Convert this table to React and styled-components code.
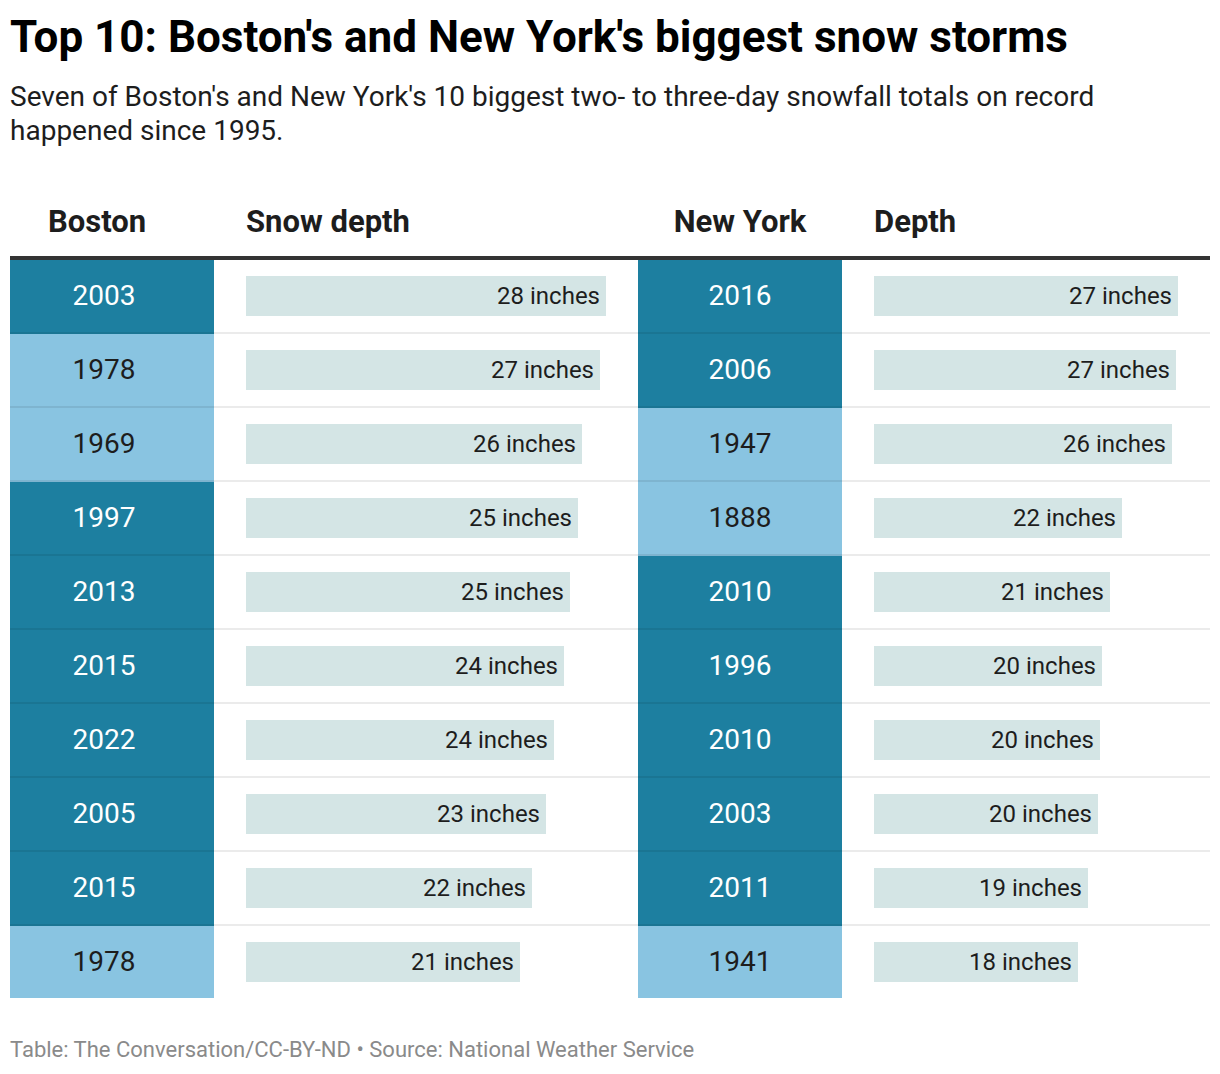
import React from 'react';
import styled, { createGlobalStyle } from 'styled-components';

const GlobalStyle = createGlobalStyle`
  body {
    margin: 0;
    background: #ffffff;
    font-family: Roboto, 'Liberation Sans', sans-serif;
    color: #1d1d1d;
  }
`;

const Page = styled.div`
  width: 1200px;
  padding: 11px 10px 0;
`;

const Title = styled.h1`
  margin: 0;
  font-size: 44px;
  line-height: 1.2;
  font-weight: 700;
  color: #000;
`;

const Subtitle = styled.p`
  margin: 16px 0 0;
  font-size: 28px;
  line-height: 34px;
  color: #1d1d1d;
  max-width: 1110px;
`;

const Table = styled.div`
  margin-top: 32px;
  display: flex;
  flex-direction: column;
`;

const columns = '204px 424px 204px 368px';

const HeadRow = styled.div`
  display: grid;
  grid-template-columns: ${columns};
  height: 80px;
  align-items: end;
  padding-bottom: 16px;
  box-sizing: border-box;
  border-bottom: 4px solid #333;
`;

const HeadCell = styled.div`
  font-size: 31px;
  line-height: 1.2;
  font-weight: 700;
  color: #1d1d1d;
  text-align: ${(p) => (p.$center ? 'center' : 'left')};
  padding-left: ${(p) => p.$padLeft || 0}px;
`;

const Row = styled.div`
  display: grid;
  grid-template-columns: ${columns};
`;

const Cell = styled.div`
  height: 74px;
  box-sizing: border-box;
  border-bottom: 2px solid rgba(0, 0, 0, 0.08);
  display: flex;
  align-items: center;
  ${Row}:last-child & {
    height: 72px;
    border-bottom: none;
  }
`;

const YearCell = styled(Cell)`
  justify-content: center;
  padding-right: ${(p) => p.$offset || 0}px;
  background: ${(p) => (p.$recent ? '#1d7fa0' : '#89c4e1')};
  color: ${(p) => (p.$recent ? '#ffffff' : '#1d1d1d')};
  font-size: 28px;
`;

const BarCell = styled(Cell)`
  padding-left: 32px;
`;

const Bar = styled.div`
  height: 40px;
  background: #d4e5e5;
  display: flex;
  align-items: center;
  justify-content: flex-end;
  padding-right: 6px;
  box-sizing: border-box;
  font-size: 24px;
  color: #1d1d1d;
  white-space: nowrap;
`;

const Footer = styled.div`
  margin-top: 40px;
  font-size: 22px;
  line-height: 24px;
  color: #8a8a8a;
`;

const boston = [
  { year: 2003, depth: 28, w: 360 },
  { year: 1978, depth: 27, w: 354 },
  { year: 1969, depth: 26, w: 336 },
  { year: 1997, depth: 25, w: 332 },
  { year: 2013, depth: 25, w: 324 },
  { year: 2015, depth: 24, w: 318 },
  { year: 2022, depth: 24, w: 308 },
  { year: 2005, depth: 23, w: 300 },
  { year: 2015, depth: 22, w: 286 },
  { year: 1978, depth: 21, w: 274 },
];

const newYork = [
  { year: 2016, depth: 27, w: 304 },
  { year: 2006, depth: 27, w: 302 },
  { year: 1947, depth: 26, w: 298 },
  { year: 1888, depth: 22, w: 248 },
  { year: 2010, depth: 21, w: 236 },
  { year: 1996, depth: 20, w: 228 },
  { year: 2010, depth: 20, w: 226 },
  { year: 2003, depth: 20, w: 224 },
  { year: 2011, depth: 19, w: 214 },
  { year: 1941, depth: 18, w: 204 },
];

export default function App() {
  return (
    <Page>
      <GlobalStyle />
      <Title>Top 10: Boston's and New York's biggest snow storms</Title>
      <Subtitle>
        Seven of Boston's and New York's 10 biggest two- to three-day snowfall totals on record
        happened since 1995.
      </Subtitle>
      <Table>
        <HeadRow>
          <HeadCell $padLeft={38}>Boston</HeadCell>
          <HeadCell $padLeft={32}>Snow depth</HeadCell>
          <HeadCell $center>New York</HeadCell>
          <HeadCell $padLeft={32}>Depth</HeadCell>
        </HeadRow>
        {boston.map((b, i) => {
          const n = newYork[i];
          return (
            <Row key={i}>
              <YearCell $recent={b.year >= 1995} $offset={16}>{b.year}</YearCell>
              <BarCell>
                <Bar style={{ width: b.w }}>{b.depth} inches</Bar>
              </BarCell>
              <YearCell $recent={n.year >= 1995}>{n.year}</YearCell>
              <BarCell>
                <Bar style={{ width: n.w }}>{n.depth} inches</Bar>
              </BarCell>
            </Row>
          );
        })}
      </Table>
      <Footer>Table: The Conversation/CC-BY-ND • Source: National Weather Service</Footer>
    </Page>
  );
}
